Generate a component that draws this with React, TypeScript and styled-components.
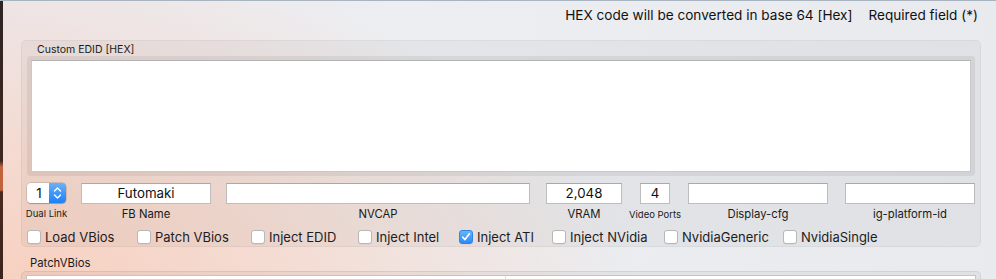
import React from "react";
import styled, { createGlobalStyle } from "styled-components";

const GlobalStyle = createGlobalStyle`
  html, body { margin: 0; padding: 0; }
  body {
    width: 996px;
    height: 279px;
    overflow: hidden;
    font-family: Inter, "Liberation Sans", Arial, sans-serif;
    color: #1d1d1d;
  }
`;

const Window = styled.div`
  display: flex;
  width: 996px;
  height: 279px;
  border-top: 1px solid #a9b4c1;
  box-sizing: border-box;
  background:
    radial-gradient(ellipse 640px 340px at 0px 300px, rgba(248, 207, 190, 1), rgba(247, 214, 200, 0.72) 45%, rgba(240, 225, 225, 0) 100%),
    linear-gradient(90deg, #ece7ea 0%, #eceef1 40%, #e8eaee 100%);
  overflow: hidden;
`;

const Edge = styled.div`
  width: 3px;
  flex: none;
  background: linear-gradient(
    180deg,
    #2c2427 0px,
    #352423 50px,
    #3f2720 160px,
    #c2633e 166px,
    #c2633e 189px,
    #4a2a1f 191px,
    #3c231c 279px
  );
`;

const Content = styled.div`
  flex: 1;
  display: flex;
  flex-direction: column;
`;

const Header = styled.div`
  display: flex;
  justify-content: flex-end;
  gap: 16px;
  height: 39px;
  padding: 6px 18px 0 0;
  box-sizing: border-box;
  font-size: 13.6px;
  line-height: 16px;
  color: #111;
`;

const Group = styled.div`
  margin: 0 15px 0 18px;
  height: 207px;
  box-sizing: border-box;
  padding: 2px 5px 0 5px;
  border-radius: 5px;
  background: rgba(0, 0, 0, 0.035);
  border: 1px solid rgba(0, 0, 0, 0.045);
  display: flex;
  flex-direction: column;
`;

const GroupTitle = styled.div`
  font-size: 10.5px;
  line-height: 13px;
  padding-left: 10px;
  color: #1a1a1a;
`;

const EditorFrame = styled.div`
  height: 120px;
  box-sizing: border-box;
  padding: 4px;
  border-radius: 4px;
  background: rgba(0, 0, 0, 0.06);
  display: flex;
`;

const Editor = styled.div`
  flex: 1;
  background: #fff;
  border: 1px solid #c9c9c9;
  border-top-color: #b3b3b3;
`;

const FieldRow = styled.div`
  display: flex;
  margin-top: 7px;
  height: 45px;
`;

const FieldCol = styled.div<{ $w: number; $ml: number }>`
  width: ${(p) => p.$w}px;
  margin-left: ${(p) => p.$ml}px;
  display: flex;
  flex-direction: column;
  align-items: center;
  flex: none;
`;

const TextBox = styled.div`
  width: 100%;
  height: 21px;
  box-sizing: border-box;
  background: #fff;
  border: 1px solid #bdbdbd;
  border-top-color: #a9a9a9;
  font-size: 13.3px;
  line-height: 19px;
  text-align: center;
  color: #111;
`;

const FieldLabel = styled.div<{ $small?: boolean }>`
  margin-top: ${(p) => (p.$small ? "4px" : "3px")};
  font-size: ${(p) => (p.$small ? "9.5px" : "11.3px")};
  line-height: 14px;
  white-space: nowrap;
  color: #1a1a1a;
`;

const Stepper = styled.div`
  width: 100%;
  height: 20px;
  display: flex;
  border-radius: 4px;
  box-shadow: 0 0 0 0.5px rgba(0, 0, 0, 0.2), 0 0.5px 1px rgba(0, 0, 0, 0.2);
  overflow: hidden;
`;

const StepperValue = styled.div`
  flex: 1;
  background: #fff;
  font-size: 13.3px;
  line-height: 20px;
  text-align: center;
  padding-left: 2px;
  color: #111;
`;

const StepperArrows = styled.div`
  width: 17px;
  background: linear-gradient(180deg, #69b1fa, #1c7ff6);
  display: flex;
  align-items: center;
  justify-content: center;
`;

const CheckRow = styled.div`
  display: flex;
  align-items: center;
  margin-top: 1px;
  height: 16px;
`;

const CheckItem = styled.label<{ $w?: number }>`
  display: flex;
  align-items: center;
  gap: 4px;
  width: ${(p) => (p.$w ? `${p.$w}px` : "auto")};
  flex: none;
  font-size: 13px;
  line-height: 16px;
  color: #1d1d1d;
  white-space: nowrap;
`;

const Box = styled.span<{ $on?: boolean }>`
  width: 14px;
  height: 14px;
  box-sizing: border-box;
  border-radius: 3px;
  display: inline-flex;
  align-items: center;
  justify-content: center;
  background: ${(p) => (p.$on ? "linear-gradient(180deg, #6cb3fa, #2a8af8)" : "#fff")};
  border: 1px solid ${(p) => (p.$on ? "#2f84e6" : "#b8b8b8")};
  box-shadow: 0 0.5px 0.5px rgba(0, 0, 0, 0.08);
`;

const SectionLabel = styled.div`
  font-size: 11.3px;
  line-height: 14px;
  padding: 9px 0 0 27px;
  height: 24px;
  box-sizing: border-box;
  color: #1a1a1a;
`;

const BottomGroup = styled.div`
  margin: 0 15px 0 18px;
  flex: 1;
  box-sizing: border-box;
  padding: 3px 4px 0 4px;
  border-radius: 5px 5px 0 0;
  background: rgba(0, 0, 0, 0.035);
  border: 1px solid rgba(0, 0, 0, 0.07);
  border-bottom: none;
  display: flex;
`;

const Table = styled.div`
  flex: 1;
  display: grid;
  grid-template-columns: 478px 1fr;
  background: #fff;
  border: 1px solid #c4c4c4;
  border-bottom: none;
`;

const TableCol = styled.div`
  & + & {
    border-left: 1px solid #dcdcdc;
  }
`;

const fields = [
  { label: "FB Name", w: 130, ml: 15, value: "Futomaki" },
  { label: "NVCAP", w: 304, ml: 15, value: "" },
  { label: "VRAM", w: 76, ml: 16, value: "2,048" },
  { label: "Video Ports", w: 30, ml: 18, value: "4", small: true },
  { label: "Display-cfg", w: 140, ml: 18, value: "" },
  { label: "ig-platform-id", w: 130, ml: 17, value: "" },
];

const checks = [
  { label: "Load VBios", w: 110 },
  { label: "Patch VBios", w: 114 },
  { label: "Inject EDID", w: 107 },
  { label: "Inject Intel", w: 101 },
  { label: "Inject ATI", w: 93, on: true },
  { label: "Inject NVidia", w: 112 },
  { label: "NvidiaGeneric", w: 119 },
  { label: "NvidiaSingle" },
];

const Chevrons = () => (
  <svg width="9" height="14" viewBox="0 0 9 14" fill="none">
    <path d="M1.5 5 L4.5 2 L7.5 5" stroke="#fff" strokeWidth="1.4" strokeLinecap="round" strokeLinejoin="round" />
    <path d="M1.5 9 L4.5 12 L7.5 9" stroke="#fff" strokeWidth="1.4" strokeLinecap="round" strokeLinejoin="round" />
  </svg>
);

const Check = () => (
  <svg width="10" height="10" viewBox="0 0 10 10" fill="none">
    <path d="M1.8 5.2 L4 7.6 L8.4 1.8" stroke="#fff" strokeWidth="1.6" strokeLinecap="round" strokeLinejoin="round" />
  </svg>
);

export default function App() {
  return (
    <>
      <GlobalStyle />
      <Window>
        <Edge />
        <Content>
          <Header>
            <span>HEX code will be converted in base 64 [Hex]</span>
            <span>Required field (*)</span>
          </Header>
          <Group>
            <GroupTitle>Custom EDID [HEX]</GroupTitle>
            <EditorFrame>
              <Editor />
            </EditorFrame>
            <FieldRow>
              <FieldCol $w={39} $ml={0}>
                <Stepper>
                  <StepperValue>1</StepperValue>
                  <StepperArrows>
                    <Chevrons />
                  </StepperArrows>
                </Stepper>
                <FieldLabel $small>Dual Link</FieldLabel>
              </FieldCol>
              {fields.map((f) => (
                <FieldCol key={f.label} $w={f.w} $ml={f.ml}>
                  <TextBox>{f.value}</TextBox>
                  <FieldLabel $small={f.small}>{f.label}</FieldLabel>
                </FieldCol>
              ))}
            </FieldRow>
            <CheckRow>
              {checks.map((c) => (
                <CheckItem key={c.label} $w={c.w}>
                  <Box $on={c.on}>{c.on && <Check />}</Box>
                  {c.label}
                </CheckItem>
              ))}
            </CheckRow>
          </Group>
          <SectionLabel>PatchVBios</SectionLabel>
          <BottomGroup>
            <Table>
              <TableCol />
              <TableCol />
            </Table>
          </BottomGroup>
        </Content>
      </Window>
    </>
  );
}
